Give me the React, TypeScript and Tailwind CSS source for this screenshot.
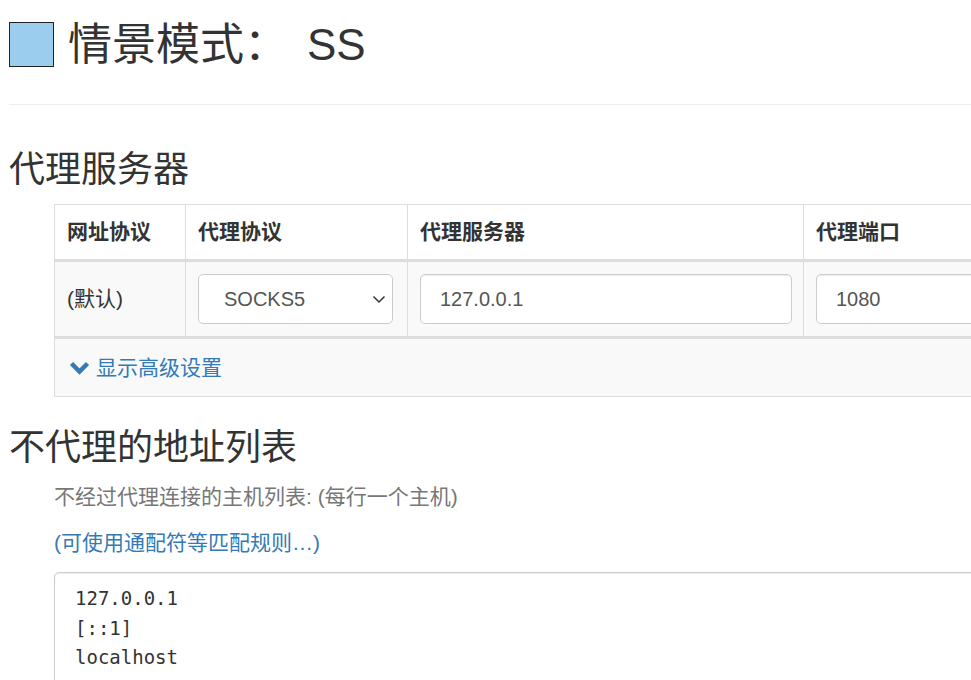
import * as React from "react";

// --- Small drawings ---
const SelectChevron = () => (
  <svg width="14" height="9" viewBox="0 0 14 9" fill="none">
    <path d="M1.5 1.5 L7 7 L12.5 1.5" stroke="#333" strokeWidth="1.5" />
  </svg>
);

const BoldChevronDown = () => (
  <svg width="21" height="14" viewBox="0 0 21 14" fill="none">
    <path d="M2.5 2.5 L10.5 10.5 L18.5 2.5" stroke="#337ab7" strokeWidth="4.5" strokeLinejoin="miter" />
  </svg>
);

const fontStack = "font-['Liberation_Sans','Noto_Sans_CJK_SC',sans-serif]";

const Cell = ({
  width,
  first = false,
  children,
}: {
  width: string;
  first?: boolean;
  children: React.ReactNode;
}) => (
  <div
    className={`${width} shrink-0 flex items-center pl-3 ${
      first ? "" : "border-l border-[#ddd]"
    }`}
  >
    {children}
  </div>
);

export default function App() {
  return (
    <div
      className={`${fontStack} min-h-screen w-full overflow-hidden bg-white pl-[9px] text-[#333]`}
    >
      {/* --- Page header --- */}
      <div className="mt-[22px] flex h-[45px] items-center">
        <div className="h-[45px] w-[45px] shrink-0 border border-[#222] bg-[#9acdee]" />
        <h1 className="ml-[14px] text-[44px] leading-[48px] font-normal whitespace-nowrap">
          情景模式：<span className="ml-[19px]">SS</span>
        </h1>
      </div>
      <div className="mt-[37px] border-b border-[#eee]" />

      {/* --- Proxy servers --- */}
      <h2 className="mt-[45px] text-[36px] leading-[40px] font-normal">代理服务器</h2>
      <div className="ml-[45px] mt-[14px] w-[1000px] shrink-0 border border-[#ddd] text-[21px]">
        <div className="flex h-[57px] border-b-[3px] border-[#ddd] font-bold">
          <Cell width="w-[130px]" first>网址协议</Cell>
          <Cell width="w-[222px]">代理协议</Cell>
          <Cell width="w-[396px]">代理服务器</Cell>
          <Cell width="w-[250px]">代理端口</Cell>
        </div>
        <div className="flex h-[77px] border-b-[3px] border-[#ddd] bg-[#f9f9f9]">
          <Cell width="w-[130px]" first>(默认)</Cell>
          <Cell width="w-[222px]">
            <div className="flex h-[50px] w-[195px] items-center justify-between rounded-[5px] border border-[#ccc] bg-white pl-[25px] pr-[6px] text-[20px] text-[#555]">
              <span>SOCKS5</span>
              <SelectChevron />
            </div>
          </Cell>
          <Cell width="w-[396px]">
            <div className="flex h-[50px] w-[372px] items-center rounded-[5px] border border-[#ccc] bg-white pl-[19px] text-[20px] text-[#555] shadow-[inset_0_1px_1px_rgba(0,0,0,0.075)]">
              127.0.0.1
            </div>
          </Cell>
          <Cell width="w-[250px]">
            <div className="flex h-[50px] w-[230px] items-center rounded-[5px] border border-[#ccc] bg-white pl-[19px] text-[20px] text-[#555] shadow-[inset_0_1px_1px_rgba(0,0,0,0.075)]">
              1080
            </div>
          </Cell>
        </div>
        <div className="flex h-[57px] items-center gap-[6px] bg-[#f9f9f9] pl-[14px] text-[#337ab7]">
          <BoldChevronDown />
          <span>显示高级设置</span>
        </div>
      </div>

      {/* --- Bypass list --- */}
      <h2 className="mt-[31px] text-[36px] leading-[40px] font-normal">不代理的地址列表</h2>
      <div className="ml-[45px] text-[21px]">
        <p className="mt-[15px] leading-[28px] text-[#777]">
          不经过代理连接的主机列表: (每行一个主机)
        </p>
        <p className="mt-[18px] leading-[28px] text-[#337ab7]">(可使用通配符等匹配规则…)</p>
        <textarea
          readOnly
          defaultValue={"127.0.0.1\n[::1]\nlocalhost"}
          className="mt-[15px] block h-[200px] w-[1000px] resize-none rounded-[5px] border border-[#ccc] bg-white px-[20px] pt-[11px] font-['DejaVu_Sans_Mono',monospace] text-[19px] leading-[29.5px] text-[#333] shadow-[inset_0_1px_1px_rgba(0,0,0,0.075)] outline-none"
        />
      </div>
    </div>
  );
}
